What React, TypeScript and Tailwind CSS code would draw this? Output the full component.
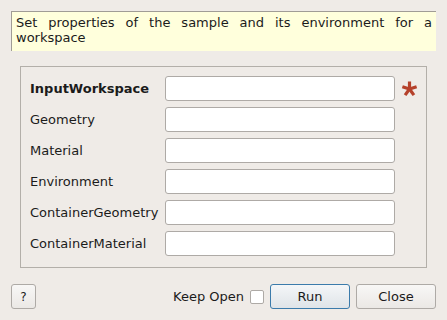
import React from "react";

const fields = [
  { name: "InputWorkspace", required: true },
  { name: "Geometry" },
  { name: "Material" },
  { name: "Environment" },
  { name: "ContainerGeometry" },
  { name: "ContainerMaterial" },
];

const Asterisk = () => (
  <svg width="17" height="16" viewBox="-8.5 -8 17 16" className="text-[#b5412b]">
    {[-90, -18, 54, 126, 198].map((a) => (
      <line
        key={a}
        x1="0"
        y1="0"
        x2={7.5 * Math.cos((a * Math.PI) / 180)}
        y2={7.5 * Math.sin((a * Math.PI) / 180)}
        stroke="currentColor"
        strokeWidth="3.2"
        strokeLinecap="butt"
      />
    ))}
  </svg>
);

export default function App() {
  return (
    <div className="w-[447px] h-[320px] bg-[#efebe7] flex flex-col font-['DejaVu_Sans',sans-serif] text-[13px] text-[#1b1b1b] overflow-hidden">
      <div className="ml-[11px] mt-[11px] w-[425px] h-[40px] bg-[#ffffdc] border-l border-t border-[#a09c96] px-[4px] pt-[4px] leading-[14.5px] text-justify">
        Set properties of the sample and its environment for a workspace
      </div>

      <div className="ml-[20px] mt-[15px] w-[407px] h-[202px] border border-[#b3afa9] pt-[9px] pl-[9px] flex flex-col gap-[6px]">
        {fields.map((f) => (
          <div key={f.name} className="flex items-center h-[25px]">
            <div className={`w-[135px] ${f.required ? "font-bold" : ""}`}>{f.name}</div>
            <div className="w-[230px] h-[25px] bg-white border border-[#aeaaa6] rounded-[3px]" />
            {f.required && (
              <div className="ml-[6px] flex items-center">
                <Asterisk />
              </div>
            )}
          </div>
        ))}
      </div>

      <div className="mt-[16px] ml-[11px] flex items-center h-[25px]">
        <button className="w-[25px] h-[25px] border border-[#aeaaa6] rounded-[3px] bg-gradient-to-b from-[#f8f7f6] to-[#ebe8e5] text-[12px]">
          ?
        </button>
        <div className="ml-auto flex items-center">
          <span>Keep Open</span>
          <div className="ml-[6px] w-[14px] h-[14px] bg-white border border-[#aeaaa6] rounded-[2px]" />
          <button className="ml-[6px] w-[80px] h-[25px] border border-[#3b7bab] rounded-[3px] bg-gradient-to-b from-[#f4f6f8] to-[#dfe4e8]">
            Run
          </button>
          <button className="ml-[6px] mr-[11px] w-[80px] h-[25px] border border-[#aeaaa6] rounded-[3px] bg-gradient-to-b from-[#f8f7f6] to-[#ebe8e5]">
            Close
          </button>
        </div>
      </div>
    </div>
  );
}
